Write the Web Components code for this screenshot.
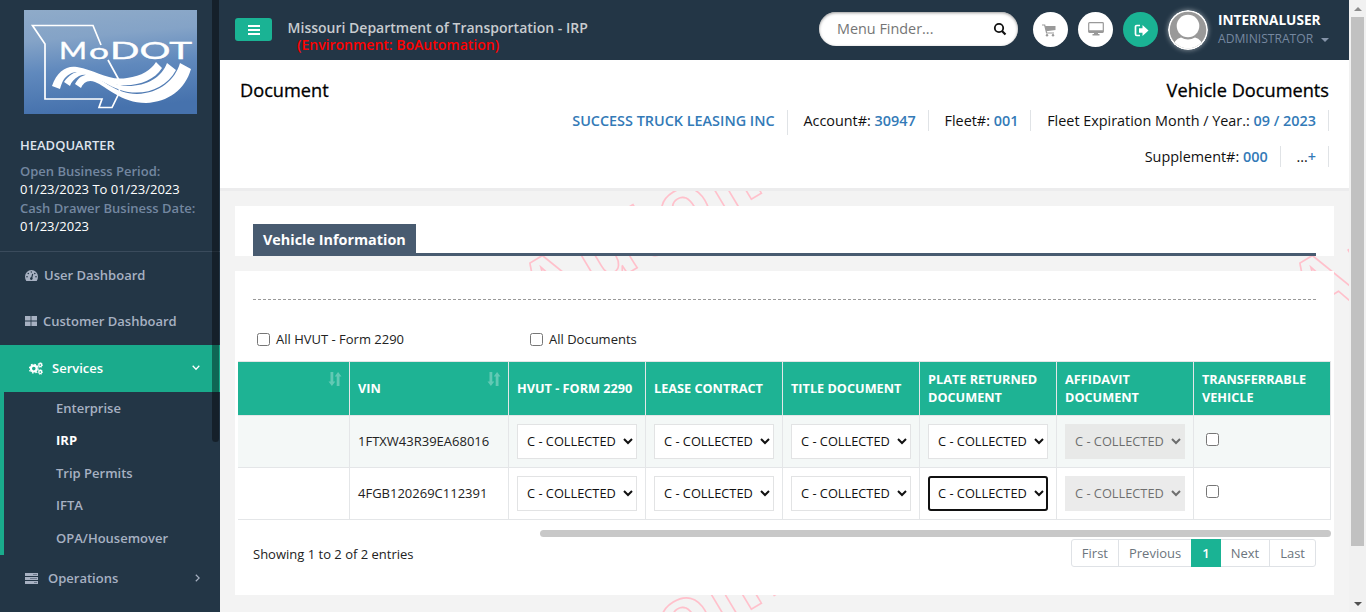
<!DOCTYPE html>
<html lang="en"><head><meta charset="utf-8"><title>Vehicle Documents</title>
<style>
html,body{margin:0;padding:0;height:612px;overflow:hidden;background:#f3f3f4}
body{font:13px/18px "Open Sans","Noto Sans",sans-serif;color:#222}
</style></head><body>
<irp-app></irp-app>
<script>
const define=(name,html,init)=>{
  const t=document.createElement('template');t.innerHTML=html;
  customElements.define(name,class extends HTMLElement{
    constructor(){super();this.attachShadow({mode:'open'}).append(t.content.cloneNode(true));}
    connectedCallback(){if(init)init(this,this.shadowRoot);}
  });
};

define('irp-logo',`<style>:host{display:block;width:173px;height:104px}svg{display:block}</style>
<svg width="173" height="104" viewBox="0 0 173 104">
<defs><linearGradient id="g" x1="0" y1="0" x2=".15" y2="1"><stop offset="0" stop-color="#8fabc9"/><stop offset=".3" stop-color="#84a3c7"/><stop offset=".6" stop-color="#6089bd"/><stop offset="1" stop-color="#4672ad"/></linearGradient></defs>
<rect width="173" height="104" fill="url(#g)"/>
<path d="M77 35 L69 15.500H8.500L21 34V89H78L75 97.500H88L95.500 82L95 70L84 50" fill="none" stroke="#fff" stroke-width="1.700"/>
<g fill="#fff" stroke="#fff" stroke-width=".4"><text x="35" y="49" textLength="28" lengthAdjust="spacingAndGlyphs" font-family="Lato" font-size="24">M</text>
<text x="65" y="49" textLength="20" lengthAdjust="spacingAndGlyphs" font-family="Lato" font-size="22">o</text>
<text x="86" y="49" textLength="82" lengthAdjust="spacingAndGlyphs" font-family="Lato" font-size="24">DOT</text></g>
<g fill="#fff"><path d="M28 76C33 61 43 55 53 57C72 60 83 71 103 68C118 66 127 60 132 52L138 58C129 72 110 78 88 74C70 70 57 57 46 64C40 67 38 72 36 79Z"/>
<path d="M40 72C45 65 50 62 57 61C72 62 82 75 104 76C123 76 138 67 143 53L152 60C143 77 124 85 104 82C82 78 68 60 55 66C50 69 47 72 46 76Z"/>
<path d="M51 74C55 66 61 64 67 65C79 69 91 84 113 84C136 83 151 70 156 53L167 59C161 80 144 92 122 93C97 93 82 76 71 72C64 69 59 73 57 78Z"/></g>
</svg>`);

define('nav-item',`<style>:host{display:flex;height:46px;align-items:center;color:#a7b1c2;font-weight:600;box-sizing:border-box;padding-left:25px}
::slotted(svg){flex:none;margin-right:var(--gap,6px)}</style><slot></slot>`);
define('sub-item',`<style>:host{display:block;padding-left:52px;font-weight:600;color:#a7b1c2;line-height:32.500px;height:32.500px}:host([on]){color:#fff;font-weight:700}</style><slot></slot>`);

define('irp-sidebar',`<style>
:host{display:block;width:220px;height:612px;background:#233646;position:relative;overflow:hidden}
irp-logo{margin:10px 0 0 24px}
.info{padding:22px 0 0 20px;height:115px}
.hq{font-weight:600;color:#dfe4ed;margin-bottom:8px;line-height:18px}
.k{font-weight:600;color:#7387a0;line-height:18px;white-space:nowrap}.v{color:#fff;line-height:18.500px;font-weight:400}
nav{border-top:1px solid #3a4b5c}
.act{background:#1aab8c;color:#fff;padding-left:29px;height:47px;margin-top:1px;padding-bottom:1px;font-weight:600}
.push{margin-left:auto;margin-right:var(--r,20px)!important}
.sub{border-left:4px solid #1aab8c;height:163px}
.sub sub-item:nth-child(even){line-height:31.400px}
.bar{position:absolute;left:212px;top:-4px;width:7px;height:446px;border-radius:4px;background:rgba(0,0,0,.4)}
</style>
<irp-logo></irp-logo>
<div class="info"><div class="hq">HEADQUARTER</div><div class="k">Open Business Period:</div><div class="v">01/23/2023 To 01/23/2023</div><div class="k">Cash Drawer Business Date:</div><div class="v">01/23/2023</div></div>
<nav>
<nav-item style="--gap:6px"><svg width="13" height="11" viewBox="0 0 13 11"><path d="M6.500 0A6.500 6.500 0 0 0 0 6.500Q0 9 1.300 11H11.700Q13 9 13 6.500A6.500 6.500 0 0 0 6.500 0Z" fill="#a7b1c2"/><path d="M6.500 8.500L7.700 3.800" stroke="#233646" stroke-width="1.100"/><g fill="#233646"><circle cx="6.300" cy="8.600" r="1.300"/><circle cx="2" cy="6.700" r=".8"/><circle cx="3.300" cy="3.500" r=".8"/><circle cx="6.300" cy="2" r=".7"/><circle cx="9.800" cy="3.500" r=".8"/><circle cx="11" cy="6.700" r=".8"/></g></svg>User Dashboard</nav-item>
<nav-item style="--gap:6px"><svg width="12" height="10" viewBox="0 0 12 10"><path d="M0 0H5.600V4.600H0ZM6.400 0H12V4.600H6.400ZM0 5.400H5.600V10H0ZM6.400 5.400H12V10H6.400Z" fill="#a7b1c2"/></svg>Customer Dashboard</nav-item>
<nav-item class="act" style="--gap:9px"><svg width="14" height="13" viewBox="0 0 14 13"><circle cx="4.800" cy="6.600" r="2.900" fill="none" stroke="#fff" stroke-width="2.200"/><circle cx="4.800" cy="6.600" r="4.400" fill="none" stroke="#fff" stroke-width="1.200" stroke-dasharray="1.700 1.750"/><g fill="none" stroke="#fff"><circle cx="11.300" cy="3" r="1.500" stroke-width="1.300"/><circle cx="11.300" cy="10" r="1.500" stroke-width="1.300"/><circle cx="11.300" cy="3" r="2.400" stroke-width=".8" stroke-dasharray="1 .9"/><circle cx="11.300" cy="10" r="2.400" stroke-width=".8" stroke-dasharray="1 .9"/></g></svg>Services<svg class="push" width="8" height="6" viewBox="0 0 8 6"><path d="M.7 .8L4 4.200L7.300 .8" fill="none" stroke="#fff" stroke-width="1.300"/></svg></nav-item>
<div class="sub"><sub-item>Enterprise</sub-item><sub-item on>IRP</sub-item><sub-item>Trip Permits</sub-item><sub-item>IFTA</sub-item><sub-item>OPA/Housemover</sub-item></div>
<nav-item style="--gap:10px"><svg width="13" height="11" viewBox="0 0 13 11"><path d="M0 0H13V3H0ZM0 4H13V7H0ZM0 8H13V11H0Z" fill="#a7b1c2"/><path d="M8 1.500H12M5 5.500H12M9 9.500H12" stroke="#5d6b7d" stroke-width=".8"/></svg>Operations<svg class="push" width="5" height="8" viewBox="0 0 5 8"><path d="M.8 .7L4.200 4L.8 7.300" fill="none" stroke="#a7b1c2" stroke-width="1.200"/></svg></nav-item>
</nav><div class="bar"></div>`);

define('round-button',`<style>:host{display:flex;width:35px;height:35px;border-radius:50%;background:#fff;align-items:center;justify-content:center;margin-right:10px;flex:none}:host([green]){background:#1ab394}</style><slot></slot>`);

define('top-bar',`<style>
:host{display:flex;height:60px;background:#233646;box-sizing:border-box;padding-left:15px;align-items:flex-start;position:relative}
.menu{width:37px;height:23px;border-radius:3px;background:#1ab394;margin-top:18px;display:flex;align-items:center;justify-content:center;flex:none}
.title{margin:19px 0 0 15.600px;font-weight:600;font-size:14px;line-height:17px;color:#c8ccd0;flex:1;white-space:nowrap}
.env{color:#f00;padding-left:9.400px}
.find{width:199px;height:34px;border-radius:17px;background:#fff;box-shadow:inset 0 1px 3px #999;margin:12px 15px 0 0;box-sizing:border-box;padding:0 11px 0 18px;display:flex;align-items:center;justify-content:space-between;color:#757575;font-size:14.400px;flex:none}
round-button{margin-top:12px}
.av{margin:10px 10px 0 0;width:40px;height:40px;border-radius:50%;box-shadow:0 0 5px rgba(255,255,255,.5);flex:none}
.user{width:131px;padding-top:10px;line-height:19px;flex:none;color:#fff;font-weight:700;font-size:13.600px}
.role{color:#7688a0;font-size:12.100px;font-weight:400;display:flex;align-items:center;line-height:18px;margin-top:1px}
.role i{border:4px solid transparent;border-top-color:#8594a9;border-bottom:0;margin:2px 0 0 8px}
</style>
<div class="menu"><svg width="12" height="10" viewBox="0 0 12 10"><path d="M0 1H12M0 5H12M0 9H12" stroke="#fff" stroke-width="2"/></svg></div>
<div class="title">Missouri Department of Transportation - IRP<div class="env">(Environment: BoAutomation)</div></div>
<div class="find"><span>Menu Finder...</span><svg width="14" height="14" viewBox="0 0 14 14"><circle cx="6" cy="6" r="4.200" fill="none" stroke="#111" stroke-width="1.800"/><path d="M9 9L12.500 12.500" stroke="#111" stroke-width="2.200"/></svg></div>
<round-button><svg style="margin:1px 0 0 -3px" width="14" height="13" viewBox="0 0 14 13"><path d="M0 1H2.700L4.600 9H12" fill="none" stroke="#999" stroke-width="1.200"/><path d="M3 2H13.500V6L4.300 7.300Z" fill="#999"/><circle cx="5" cy="11.300" r="1.200" fill="#999"/><circle cx="11" cy="11.300" r="1.200" fill="#999"/></svg></round-button>
<round-button><svg style="margin-top:-2px" width="16" height="14" viewBox="0 0 16 14"><path d="M1.500 .7H14.500Q15.300 .7 15.300 1.500V9.500Q15.300 10.300 14.500 10.300H1.500Q.7 10.300 .7 9.500V1.500Q.7 .7 1.500 .7Z" fill="#fff" stroke="#999" stroke-width="1.200"/><path d="M.7 8.300H15.300V10.300H.7ZM6 10H10V12H11.500V13.500H4.500V12H6Z" fill="#999"/></svg></round-button>
<round-button green><svg style="margin:1px 0 0 1px" width="15" height="13" viewBox="0 0 15 13"><path d="M6 1.500H2.800Q1.500 1.500 1.500 3V10Q1.500 11.500 2.800 11.500H6" fill="none" stroke="#fff" stroke-width="1.700"/><path d="M5 4.300H8.500V1L14.500 6.500L8.500 12V8.700H5Z" fill="#fff"/></svg></round-button>
<svg class="av" viewBox="0 0 40 40"><defs><clipPath id="c"><circle cx="20" cy="20" r="18.300"/></clipPath></defs><circle cx="20" cy="20" r="20" fill="#fff"/><g clip-path="url(#c)"><rect width="40" height="40" fill="#999"/><circle cx="20" cy="16" r="11.300" fill="#fff"/><path d="M4 39Q6 29 13 27.500Q20 31.500 27 27.500Q34 29 36 39Z" fill="#fff"/></g></svg>
<div class="user">INTERNALUSER<div class="role">ADMINISTRATOR<i></i></div></div>`);

define('info-crumb',`<style>:host{display:block;padding:0 12px 0 15.800px;height:21px;line-height:21px;border-right:1px solid #e0e3e6;color:#111;font-size:14.400px;white-space:nowrap}
::slotted(b){color:#337ab7;font-weight:600}</style><slot></slot>`);
define('page-head',`<style>
:host{display:block;height:128px;background:#fff;border-bottom:3px solid #ececed;color:#111}
.t{display:flex;justify-content:space-between;padding:18px 20px 0;font-size:18.200px;line-height:24px;color:#000;-webkit-text-stroke:.3px #000}
.r{display:flex;justify-content:flex-end;padding-right:20px;height:27px;align-items:flex-start}
</style>
<div class="t"><span>Document</span><span>Vehicle Documents</span></div>
<div class="r" style="padding-top:8px;height:28px"><info-crumb style="height:25px"><b>SUCCESS TRUCK LEASING INC</b></info-crumb><info-crumb>Account#: <b>30947</b></info-crumb><info-crumb>Fleet#: <b>001</b></info-crumb><info-crumb>Fleet Expiration Month / Year.: <b>09 / 2023</b></info-crumb></div>
<div class="r" style="padding-top:8px"><info-crumb>Supplement#: <b>000</b></info-crumb><info-crumb>...<b>+</b></info-crumb></div>`);

define('doc-select',`<style>:host{display:block;width:120px;height:35px}
select{width:120px;height:35px;box-sizing:border-box;border:1px solid #e2e3e4;border-radius:0;background:#fff;color:#111;font:12.800px "Open Sans",sans-serif;padding:0 1px 2px 5px;margin:0;display:block}
select:disabled{background:#e3e3e3;border-color:#e3e3e3;color:#333;opacity:.7}
:host([current]) select{outline:2px solid #111;outline-offset:-2px;border-radius:3px}
</style><select><option>C - COLLECTED</option></select>`,(el,root)=>{root.querySelector('select').disabled=el.hasAttribute('off');});

const fillGrid=(el,root)=>{
  const sort='<svg width="14" height="14" viewBox="0 0 14 14"><path d="M2.500 0H5.300V9.500H7.300L3.900 14L.5 9.500H2.500ZM8.700 14V4.500H6.700L10.100 0L13.500 4.500H11.500V14Z" fill="#62c9b4"/></svg>';
  let h=`<div class="h s"><span></span>${sort}</div><div class="h s"><span>VIN</span>${sort}</div>`;
  for(const x of ['HVUT - FORM 2290','LEASE CONTRACT','TITLE DOCUMENT','PLATE RETURNED<br>DOCUMENT','AFFIDAVIT<br>DOCUMENT','TRANSFERRABLE<br>VEHICLE'])h+=`<div class="h"><span>${x}</span></div>`;
  ['1FTXW43R39EA68016','4FGB120269C112391'].forEach((vin,r)=>{
    const c=r?'':'o';h+=`<div class="${c}"></div><div class="vin ${c}">${vin}</div>`;
    for(let i=0;i<5;i++)h+=`<div class="${c}"><doc-select ${i==4?'off':''} ${r&&i==3?'current':''}></doc-select></div>`;
    h+=`<div class="${c}"><input type="checkbox" aria-label="Transferrable vehicle"></div>`;
  });
  const t=document.createElement('template');t.innerHTML=h;root.append(t.content.cloneNode(true));
};
define('data-grid',`<style>
:host{display:grid;grid-template-columns:112px 159px repeat(6,137px);width:1093px;border-top:1px solid #e3e5e6}
div{box-sizing:border-box;border-right:1px solid #e4e6e8;border-bottom:1px solid #e4e6e8;height:52px;display:flex;align-items:center;padding-left:8px;color:#222}
.h{height:54px;background:#1eb394;color:#fff;font-weight:700;line-height:18px;font-size:12.700px;white-space:nowrap}
.h span{margin-top:-2px}
.s{justify-content:space-between;padding-right:7px}.s svg{align-self:flex-start;margin-top:10px}
.o{background:#f4f8f7}.vin{padding-bottom:2px}
input{margin:0 0 4px 4px;width:13px;height:13px}
</style>`,fillGrid);

define('pager-bar',`<style>:host{display:flex;border:1px solid #dfe2e6;border-radius:3px;height:28px;box-sizing:border-box;color:#6c757d;line-height:26px}
span{padding:0 10px;border-right:1px solid #dfe2e6}span:last-child{border:0}.on{background:#1ab394;color:#fff;font-weight:600;margin:-1px 0 -1px -1px;line-height:28px;border:0;padding:0 11px}</style>
<span>First</span><span>Previous</span><span class="on">1</span><span>Next</span><span>Last</span>`);

define('page-watermark',`<style>:host{position:absolute;inset:0;overflow:hidden}svg{display:block}text{font:bold 86px "Liberation Sans",sans-serif;letter-spacing:4.500px;fill:none;stroke:#ffc0cb;stroke-width:1.600}</style>
<svg width="1129" height="612"><g transform="translate(-220 0)"><text transform="translate(540 326) rotate(-31)">Automation</text><text transform="translate(1310 326) rotate(-31)">Automation</text><text transform="translate(540 736) rotate(-31)">Automation</text></g></svg>`);

define('window-scroll',`<style>:host{display:flex;flex-direction:column;width:17px;height:612px;background:#f1f1f1;align-items:center}
.u,.d{height:17px;display:flex;align-items:center}.t{width:13px;height:529px;background:#c1c1c1;margin-bottom:auto}
i{border:4px solid transparent;border-top:0;border-bottom-color:#8b8b8b}.d i{border-top:4px solid #505050;border-bottom:0}</style><div class="u"><i></i></div><div class="t"></div><div class="d"><i></i></div>`);

define('irp-app',`<style>
:host{display:flex;width:1366px;height:612px;overflow:hidden}
main{width:1129px;position:relative;background:#f3f3f3;overflow:hidden}
.flow{position:relative}
.card{background:#fff;margin:15px 15px 0;width:1099px}
.a{height:50px;padding:18px 18px 0;box-sizing:border-box}
.tab{border-bottom:3px solid #485b70;height:29px;display:flex}
.tab span{background:#485b70;color:#fff;font-weight:700;font-size:14.400px;line-height:32px;height:30px;padding:0 10px;width:143px;white-space:nowrap}
.b{height:324px}
.dash{margin:0 18px;padding-top:29px;height:0;background:repeating-linear-gradient(90deg,#999 0 3px,transparent 3px 5px) bottom/100% 1px no-repeat}
.checks{display:flex;padding:30px 0 0 21.500px;height:31px;color:#222}
label{display:flex;width:273px;line-height:18px}label input{margin:3px 6.500px 0 0;width:13px;height:13px}
data-grid{margin-left:3px}
.bar{height:7px;border-radius:4px;background:#c8c8c8;margin:10px 3px 0 305px}
.foot{display:flex;justify-content:space-between;padding:2px 18px 0}
.foot>span{line-height:18px;margin-top:6px;color:#222}
</style>
<irp-sidebar></irp-sidebar>
<main><page-watermark></page-watermark><div class="flow"><top-bar></top-bar><page-head></page-head>
<section class="card a"><div class="tab"><span>Vehicle Information</span></div></section>
<section class="card b"><div class="dash"></div>
<div class="checks"><label><input type="checkbox">All HVUT - Form 2290</label><label><input type="checkbox">All Documents</label></div>
<data-grid></data-grid><div class="bar"></div>
<div class="foot"><span>Showing 1 to 2 of 2 entries</span><pager-bar></pager-bar></div></section></div></main>
<window-scroll></window-scroll>`);
</script></body></html>
